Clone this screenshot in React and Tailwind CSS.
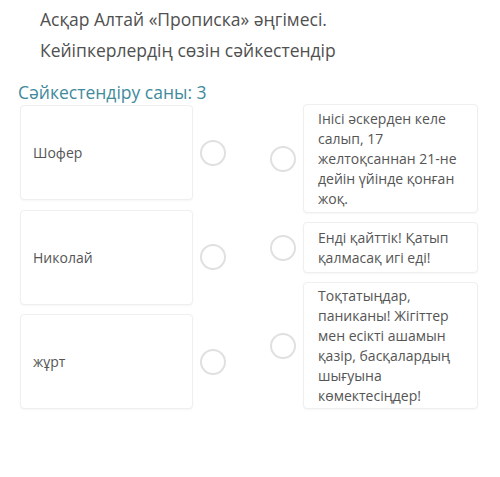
export default function App() {
  const left = ["Шофер", "Николай", "жұрт"];
  const right = [
    { text: "Інісі әскерден келе салып, 17 желтоқсаннан 21-не дейін үйінде қонған жоқ.", h: "h-[109px]" },
    { text: "Енді қайттік! Қатып қалмасақ игі еді!", h: "h-[51px]" },
    { text: "Тоқтатыңдар, паниканы! Жігіттер мен есікті ашамын қазір, басқалардың шығуына көмектесіңдер!", h: "h-[127px]" },
  ];
  const Radio = () => (
    <div className="size-[26px] shrink-0 rounded-full border-2 border-[#e0e0e0] bg-white" />
  );
  return (
    <div className="w-[500px] h-[477px] bg-white text-[#555] font-['Open_Sans',sans-serif] overflow-hidden">
      <div className="pl-[40px] pt-[4px] text-[17.5px] leading-[31px] text-[#505050]">
        <div>Асқар Алтай «Прописка» әңгімесі.</div>
        <div>Кейіпкерлердің сөзін сәйкестендір</div>
      </div>
      <div className="pl-[18px] mt-[14px] text-[17.5px] leading-[24px] text-[#3f8b9c]">
        Сәйкестендіру саны: 3
      </div>
      <div className="flex pl-[20px]">
        <div className="flex flex-col gap-[9.5px] pt-[1px]">
          {left.map((t) => (
            <div key={t} className="flex items-center">
              <div className="w-[173px] h-[95px] flex items-center pl-[12px] text-[14px] rounded-[4px] border border-[#efefef] bg-white shadow-[0_1px_2px_rgba(0,0,0,0.04)]">
                {t}
              </div>
              <div className="ml-[7px]">
                <Radio />
              </div>
            </div>
          ))}
        </div>
        <div className="flex flex-col gap-[9px] ml-[44px]">
          {right.map((r, i) => (
            <div key={i} className="flex items-center">
              <Radio />
              <div className={`ml-[7px] w-[175px] ${r.h} flex items-center pl-[14px] pr-[9px] text-[14px] leading-[20px] rounded-[4px] border border-[#efefef] bg-white shadow-[0_1px_2px_rgba(0,0,0,0.04)]`}>
                <span>{r.text}</span>
              </div>
            </div>
          ))}
        </div>
      </div>
    </div>
  );
}
